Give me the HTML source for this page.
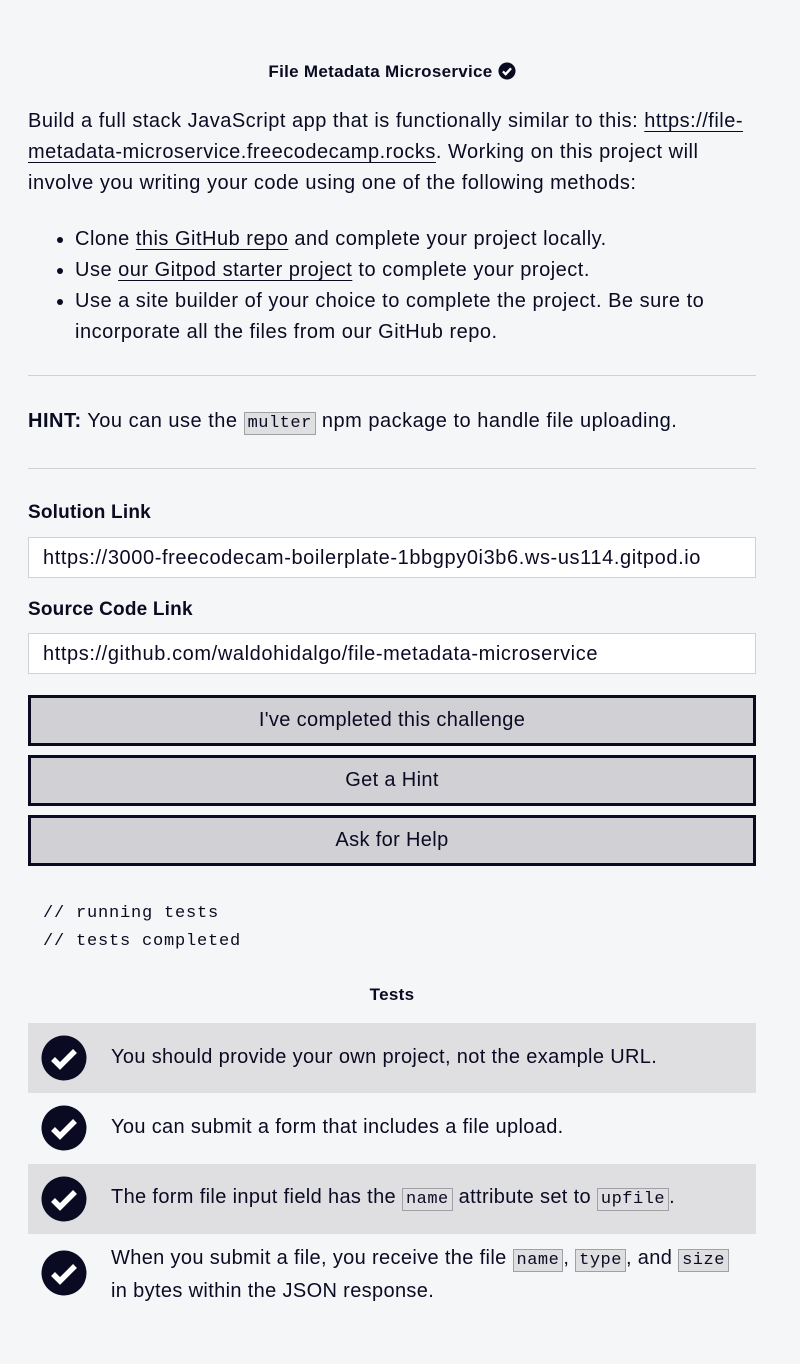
<!DOCTYPE html>
<html><head><style>
body{margin:0;background:#f5f6f7;color:#0a0a23;font-family:"Liberation Sans",sans-serif;width:800px;height:1364px;overflow:hidden;position:relative}
.a{position:absolute;left:28px;right:20px;white-space:nowrap}
p,li{font-size:20px;letter-spacing:0.5px}
a{color:#0a0a23;text-decoration:underline;text-underline-offset:4px;text-decoration-thickness:1px}
code{font-family:"Liberation Mono",monospace;font-size:17px;letter-spacing:0.5px;background:#dfdfe2;border:1px solid #a0a0a6;padding:1px 3px}
hr{position:absolute;left:28px;width:728px;border:0;border-top:1px solid #d0d0d5;margin:0}
.lbl{position:absolute;left:28px;font-weight:bold;font-size:19px;letter-spacing:0.2px}
.inp{position:absolute;left:28px;height:41px;background:#fff;border:1px solid #d0d0d5;font-size:20px;letter-spacing:0.6px;line-height:40px;padding-left:14px;box-sizing:border-box;width:728px;white-space:nowrap;overflow:hidden}
.btn{position:absolute;left:28px;width:728px;height:51px;box-sizing:border-box;border:3px solid #0a0a23;background:#d0d0d5;text-align:center;line-height:45px;font-size:20px;letter-spacing:0.35px}
.row{position:absolute;left:28px;width:728px;height:70px}
.row svg{position:absolute;left:13px;top:12px}
.row .t{position:absolute;left:83px;font-size:20px;letter-spacing:0.35px;white-space:nowrap}
</style></head><body>
<div style="position:absolute;top:62px;left:0;width:784px;text-align:center;font-weight:bold;font-size:17px;letter-spacing:0.3px">File Metadata Microservice <svg width="18" height="18" viewBox="0 0 20 20" style="vertical-align:-3px"><circle cx="10" cy="10" r="9.5" fill="#0a0a23"/><path d="M5.5 10.5l3 3 6-6.5" stroke="#fff" stroke-width="2.6" fill="none"/></svg></div>
<p class="a" style="top:106px;margin:0;line-height:31px">Build a full stack JavaScript app that is functionally similar to this: <a>https://file-</a><br><a>metadata-microservice.freecodecamp.rocks</a>. Working on this project will<br>involve you writing your code using one of the following methods:</p>
<ul class="a" style="top:224px;margin:0;padding-left:47px;line-height:31px">
<li>Clone <a>this GitHub repo</a> and complete your project locally.</li>
<li>Use <a>our Gitpod starter project</a> to complete your project.</li>
<li>Use a site builder of your choice to complete the project. Be sure to<br>incorporate all the files from our GitHub repo.</li>
</ul>
<hr style="top:375px">
<p class="a" style="top:406px;margin:0;line-height:31px"><b>HINT:</b> You can use the <code>multer</code> npm package to handle file uploading.</p>
<hr style="top:468px">
<div class="lbl" style="top:502px">Solution Link</div>
<div class="inp" style="top:537px">https://3000-freecodecam-boilerplate-1bbgpy0i3b6.ws-us114.gitpod.io</div>
<div class="lbl" style="top:599px">Source Code Link</div>
<div class="inp" style="top:633px">https://github.com/waldohidalgo/file-metadata-microservice</div>
<div class="btn" style="top:695px">I've completed this challenge</div>
<div class="btn" style="top:755px">Get a Hint</div>
<div class="btn" style="top:815px">Ask for Help</div>
<pre style="position:absolute;top:900px;left:43px;margin:0;font-family:'Liberation Mono',monospace;font-size:17px;letter-spacing:0.8px;line-height:28px">// running tests
// tests completed</pre>
<div style="position:absolute;top:985px;left:0;width:784px;text-align:center;font-weight:bold;font-size:17px;letter-spacing:0.3px">Tests</div>
<div class="row" style="top:1023px;background:#dfdfe2"><svg width="46" height="46" viewBox="0 0 46 46"><circle cx="23" cy="23" r="22.5" fill="#0a0a23"/><path d="M12 24l7 7 15-15" stroke="#fff" stroke-width="5.5" fill="none"/></svg><div class="t" style="top:23px">You should provide your own project, not the example URL.</div></div>
<div class="row" style="top:1093px"><svg width="46" height="46" viewBox="0 0 46 46"><circle cx="23" cy="23" r="22.5" fill="#0a0a23"/><path d="M12 24l7 7 15-15" stroke="#fff" stroke-width="5.5" fill="none"/></svg><div class="t" style="top:23px">You can submit a form that includes a file upload.</div></div>
<div class="row" style="top:1164px;background:#dfdfe2"><svg width="46" height="46" viewBox="0 0 46 46"><circle cx="23" cy="23" r="22.5" fill="#0a0a23"/><path d="M12 24l7 7 15-15" stroke="#fff" stroke-width="5.5" fill="none"/></svg><div class="t" style="top:22px">The form file input field has the <code>name</code> attribute set to <code>upfile</code>.</div></div>
<div class="row" style="top:1234px"><svg width="46" height="46" viewBox="0 0 46 46" style="top:16px"><circle cx="23" cy="23" r="22.5" fill="#0a0a23"/><path d="M12 24l7 7 15-15" stroke="#fff" stroke-width="5.5" fill="none"/></svg><div class="t" style="top:9px;line-height:31px">When you submit a file, you receive the file <code>name</code>, <code>type</code>, and <code>size</code><br>in bytes within the JSON response.</div></div>
</body></html>
